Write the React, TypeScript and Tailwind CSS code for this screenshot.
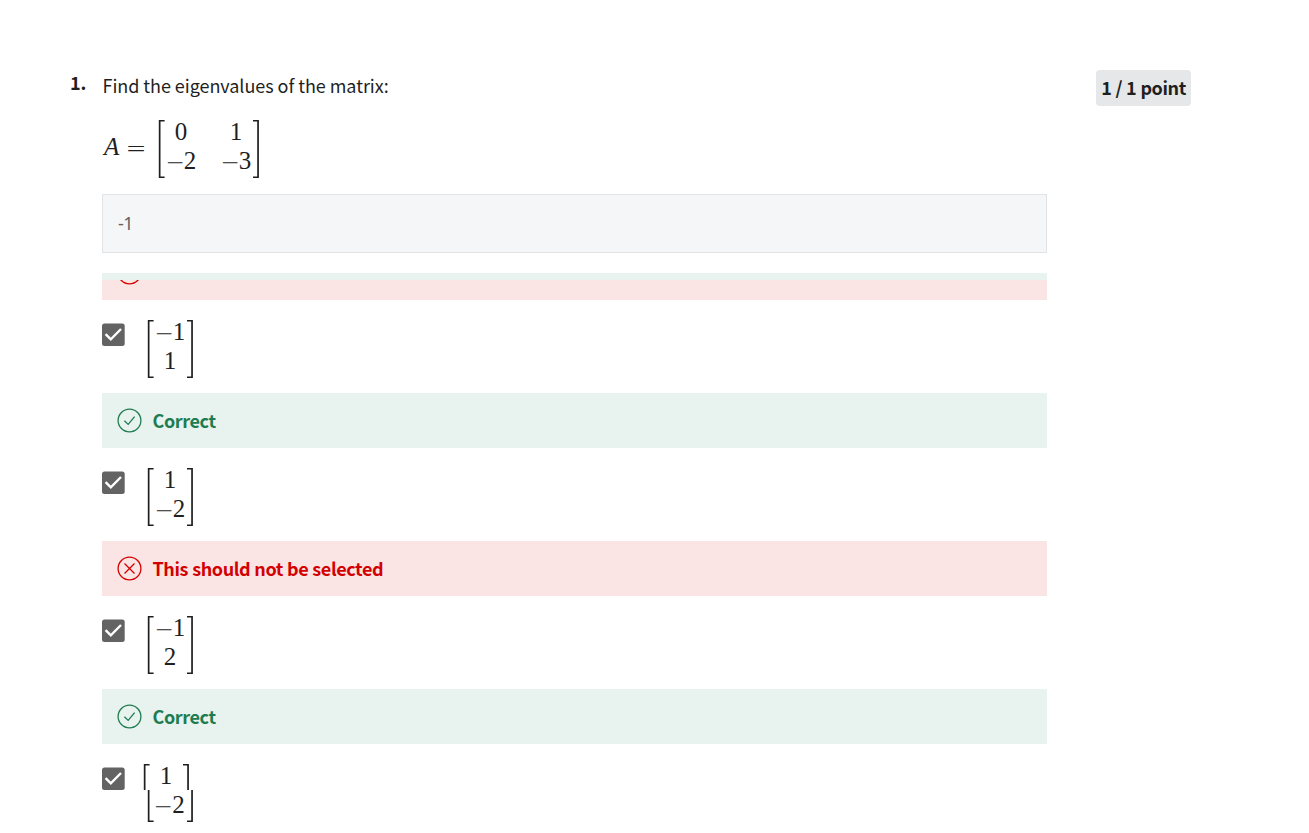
import React from "react";

const sans = "font-['Noto_Sans_CJK_SC',sans-serif]";

function Bracket({ side }: { side: "left" | "right" }) {
  return (
    <svg width="7" height="58" viewBox="0 0 7 58" className="shrink-0" fill="#1f1f1f">
      {side === "left" ? (
        <path d="M0.8 0H6.6V1.6H2.5V56.4H6.6V58H0.8Z" />
      ) : (
        <path d="M5.9 0H0V1.6H4.2V56.4H0V58H5.9Z" />
      )}
    </svg>
  );
}

function Entry({ value }: { value: number }) {
  return (
    <div className="flex h-[29px] items-center justify-center leading-[29px]">
      {value < 0 && (
        <span className="flex w-[18px] justify-center">
          <span className="inline-block translate-y-[2px] scale-x-[1.26] scale-y-[0.85]">−</span>
        </span>
      )}
      <span>{Math.abs(value)}</span>
    </div>
  );
}

function Matrix({ columns, rows = "all" }: { columns: number[][]; rows?: "all" | "first" | "last" }) {
  const height = rows === "all" ? "h-[58px]" : rows === "first" ? "h-[26px]" : "h-[32px]";
  const bracketShift = rows === "last" ? "-mt-[26px]" : "";
  return (
    <div className={`flex ${height} text-[25px] text-[#1f1f1f] font-['Liberation_Serif',serif]`}>
      <div className="overflow-hidden">
        <div className={bracketShift}>
          <Bracket side="left" />
        </div>
      </div>
      <div className="ml-[0.5px] mr-[1.5px] flex gap-[24px]">
        {columns.map((column, i) => (
          <div key={i} className="w-[31px] -mt-[3px]">
            {column.map((value, j) => (
              <Entry key={j} value={value} />
            ))}
          </div>
        ))}
      </div>
      <div className="overflow-hidden">
        <div className={bracketShift}>
          <Bracket side="right" />
        </div>
      </div>
    </div>
  );
}

function StatusIcon({ correct }: { correct: boolean }) {
  return (
    <svg
      width="25"
      height="25"
      viewBox="0 0 25 25"
      fill="none"
      strokeWidth="1.3"
      className={correct ? "shrink-0 stroke-[#1d7c50]" : "shrink-0 stroke-[#d30001]"}
    >
      <circle cx="12.5" cy="12.5" r="11.4" />
      {correct ? <path d="M7.4 12.7L11.2 16.4L17.6 8.7" /> : <path d="M7.5 7.5L17.5 17.5M17.5 7.5L7.5 17.5" />}
    </svg>
  );
}

function Feedback({ correct }: { correct: boolean }) {
  return (
    <div
      className={
        correct
          ? "flex h-[55px] items-center bg-[#e8f2ee] pl-[15px] text-[#1d7c50]"
          : "flex h-[55px] items-center bg-[#fae5e4] pl-[15px] text-[#d30001]"
      }
    >
      <StatusIcon correct={correct} />
      <span className="-mt-[2px] ml-[10.5px] text-[18px] font-bold leading-[26px] tracking-[-0.4px] [word-spacing:0.4px]">
        {correct ? "Correct" : "This should not be selected"}
      </span>
    </div>
  );
}

function Checkbox() {
  return (
    <svg width="23" height="24" viewBox="0 0 23 24" className="mt-[3px] shrink-0">
      <rect y="0.4" width="22.7" height="22.7" rx="2.5" fill="#636363" />
      <path d="M3.6 11.2L8.8 16.4L19 6" fill="none" stroke="#fff" strokeWidth="2.4" />
    </svg>
  );
}

function Option({ values }: { values: number[] }) {
  return (
    <div className="flex h-[93px] gap-[22px] pt-[20px]">
      <Checkbox />
      <Matrix columns={[values]} />
    </div>
  );
}

export default function App() {
  return (
    <main className={`flex h-[833px] w-[1309px] overflow-hidden bg-white pl-[70px] pt-[70px] text-[#1f1f1f] ${sans}`}>
      <div className="-mt-px w-8 shrink-0 text-[18px] font-bold leading-[26px]">1.</div>
      <section className="w-[945px] shrink-0">
        <p className="h-[50px] pl-[0.5px] pt-[2px] text-[18px] leading-[26px] tracking-[-0.05px]">
          Find the eigenvalues of the matrix:
        </p>
        <div className="flex h-[74px] items-start">
          <div className="flex w-[56px] pl-[2px] pt-[12px] text-[25px] leading-[29px] font-['Liberation_Serif',serif]">
            <i className="w-[22px]">A</i>
            <span className="inline-block w-[20px] text-center">
              <span className="inline-block translate-y-[2px] scale-x-[1.35] scale-y-[0.85]">=</span>
            </span>
          </div>
          <Matrix columns={[[0, -2], [1, -3]]} />
        </div>
        <div className="flex h-[59px] items-center border border-[#e1e3e5] bg-[#f5f6f8] pl-[15px] text-[18px] tracking-[-0.5px] text-[#636363] font-['Noto_Sans',sans-serif]">
          -1
        </div>
        <div className="mt-5 h-[7px] bg-[#e8f2ee]" />
        <div className="h-5 overflow-hidden bg-[#fae5e4] pl-[15px]">
          <div className="-mt-5">
            <StatusIcon correct={false} />
          </div>
        </div>
        <Option values={[-1, 1]} />
        <Feedback correct />
        <Option values={[1, -2]} />
        <Feedback correct={false} />
        <Option values={[-1, 2]} />
        <Feedback correct />
        <div className="flex pt-[20px]">
          <Checkbox />
          <div>
            <div className="ml-[18px]">
              <Matrix columns={[[1]]} rows="first" />
            </div>
            <div className="ml-[22px] flex">
              <Matrix columns={[[]]} rows="last" />
              <div className="-ml-[40px] h-[29px] w-[31px] text-[25px] font-['Liberation_Serif',serif]">
                <Entry value={-2} />
              </div>
            </div>
          </div>
        </div>
      </section>
      <div className="ml-[49px] flex h-[36px] w-[95px] shrink-0 items-center justify-center rounded bg-[#e5e7e8] text-[18px] font-bold leading-[26px] tracking-[-0.4px] [word-spacing:0.4px]">
        <span className="-mt-[2px] whitespace-nowrap">1 / 1 point</span>
      </div>
    </main>
  );
}
